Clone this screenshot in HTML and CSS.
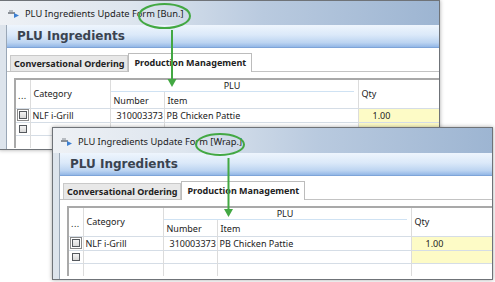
FILE: index.html
```html
<!DOCTYPE html>
<html lang="en">
<head>
    <meta charset="UTF-8">
    <title>PLU Ingredients Update Form</title>
    <link rel="stylesheet" href="styles.css">
</head>
<body>
    <div class="desk">

        <!-- back window: Bun. -->
        <div class="window win-bun">
            <div class="titlebar">
                <svg class="app-icon" width="11" height="8" viewBox="0 0 11 8">
                    <rect x="0" y="2" width="7" height="2" fill="#8a8f96"/>
                    <rect x="1" y="0" width="4" height="2" fill="#b7bcc2"/>
                    <path d="M6 3 L11 5.5 L6 8 Z" fill="#3d7fd1"/>
                </svg>
                <span class="title">PLU Ingredients Update Form [Bun.]</span>
            </div>
            <div class="client">
                <div class="banner">PLU Ingredients</div>
                <div class="tabstrip">
                    <div class="tab">Conversational Ordering</div>
                    <div class="tab active">Production Management</div>
                </div>
                <div class="panel">
                    <table class="grid">
                        <colgroup>
                            <col class="c-sel"><col class="c-cat"><col class="c-num"><col class="c-item"><col class="c-qty">
                        </colgroup>
                        <thead>
                            <tr class="h1">
                                <th rowspan="2" class="dots">...</th>
                                <th rowspan="2">Category</th>
                                <th colspan="2" class="plu"><span>PLU</span></th>
                                <th rowspan="2" class="qty-h">Qty</th>
                            </tr>
                            <tr class="h2">
                                <th>Number</th>
                                <th>Item</th>
                            </tr>
                        </thead>
                        <tbody>
                            <tr>
                                <td class="sel"><span class="focus"><span class="box"></span></span></td>
                                <td>NLF i-Grill</td>
                                <td class="num">310003373</td>
                                <td>PB Chicken Pattie</td>
                                <td class="qty">1.00</td>
                            </tr>
                            <tr>
                                <td class="sel"><span class="box"></span></td>
                                <td></td><td></td><td></td>
                                <td class="qty"></td>
                            </tr>
                            <tr>
                                <td></td><td></td><td></td><td></td><td></td>
                            </tr>
                        </tbody>
                    </table>
                </div>
            </div>
        </div>

        <!-- front window: Wrap. -->
        <div class="window win-wrap">
            <div class="titlebar">
                <svg class="app-icon" width="11" height="8" viewBox="0 0 11 8">
                    <rect x="0" y="2" width="7" height="2" fill="#8a8f96"/>
                    <rect x="1" y="0" width="4" height="2" fill="#b7bcc2"/>
                    <path d="M6 3 L11 5.5 L6 8 Z" fill="#3d7fd1"/>
                </svg>
                <span class="title">PLU Ingredients Update Form [Wrap.]</span>
            </div>
            <div class="client">
                <div class="banner">PLU Ingredients</div>
                <div class="tabstrip">
                    <div class="tab">Conversational Ordering</div>
                    <div class="tab active">Production Management</div>
                </div>
                <div class="panel">
                    <table class="grid">
                        <colgroup>
                            <col class="c-sel"><col class="c-cat"><col class="c-num"><col class="c-item"><col class="c-qty">
                        </colgroup>
                        <thead>
                            <tr class="h1">
                                <th rowspan="2" class="dots">...</th>
                                <th rowspan="2">Category</th>
                                <th colspan="2" class="plu"><span>PLU</span></th>
                                <th rowspan="2" class="qty-h">Qty</th>
                            </tr>
                            <tr class="h2">
                                <th>Number</th>
                                <th>Item</th>
                            </tr>
                        </thead>
                        <tbody>
                            <tr>
                                <td class="sel"><span class="focus"><span class="box"></span></span></td>
                                <td>NLF i-Grill</td>
                                <td class="num">310003373</td>
                                <td>PB Chicken Pattie</td>
                                <td class="qty">1.00</td>
                            </tr>
                            <tr>
                                <td class="sel"><span class="box"></span></td>
                                <td></td><td></td><td></td>
                                <td class="qty"></td>
                            </tr>
                            <tr>
                                <td></td><td></td><td></td><td></td><td></td>
                            </tr>
                        </tbody>
                    </table>
                </div>
            </div>
        </div>

        <!-- green call-outs -->
        <svg class="callouts" width="495" height="282" viewBox="0 0 495 282">
            <g fill="none" stroke="#43a843" stroke-width="2">
                <ellipse cx="164.5" cy="16" rx="25.5" ry="12"/>
                <line x1="172" y1="30" x2="172" y2="81"/>
                <ellipse cx="220" cy="144.5" rx="24" ry="10.5"/>
                <line x1="228.5" y1="158" x2="228.5" y2="211"/>
            </g>
            <g fill="#43a843">
                <path d="M167.5 79 L176.5 79 L172 87 Z"/>
                <path d="M224 209 L233 209 L228.5 217 Z"/>
            </g>
        </svg>
    </div>
</body>
</html>
```

FILE: styles.css
```css
* {
    margin: 0;
    padding: 0;
    box-sizing: border-box;
}

body {
    background: #fff;
    font-family: 'Noto Sans', 'Liberation Sans', sans-serif;
    color: #1e1e1e;
}

.desk {
    position: relative;
    width: 495px;
    height: 282px;
    overflow: hidden;
}

/* windows sit on a free canvas */
.window {
    position: absolute;
    background: #dde4ec;
    border: 1px solid #6f7378;
    box-shadow: 0 0 4px rgba(0, 0, 0, 0.35);
    overflow: hidden;
    display: flex;
    flex-direction: column;
}

.win-bun {
    left: -1px;
    top: 0;
    width: 441px;
    height: 150px;
}

.win-wrap {
    left: 52px;
    top: 127px;
    width: 441px;
    height: 153px;
}

.titlebar {
    height: 24px;
    flex: none;
    display: flex;
    align-items: center;
    gap: 6px;
    padding-left: 8px;
    background: linear-gradient(to right, #eef1f5 0%, #dde5ee 30%, #b9cadf 60%, #9db5d2 100%);
}

.win-wrap .titlebar {
    height: 25px;
    padding-top: 1px;
}

.app-icon {
    margin-top: 2px;
}

.title {
    font-size: 9.3px;
    color: #1b1b1b;
    white-space: nowrap;
}

.client {
    flex: 1;
    margin-left: 6px;
    border-left: 1px solid #9aa7b6;
    background: #fff;
    display: flex;
    flex-direction: column;
}

.banner {
    height: 23px;
    flex: none;
    padding-left: 10px;
    display: flex;
    align-items: center;
    font-family: 'DejaVu Sans', sans-serif;
    font-weight: bold;
    font-size: 12px;
    color: #3a4350;
    background: linear-gradient(to bottom, #eef5fd 0%, #dbe9f9 45%, #bcd4f1 80%, #93b7e6 100%);
    border-bottom: 1px solid #7ea4d8;
}

.tabstrip {
    flex: none;
    display: flex;
    align-items: flex-end;
    margin-top: 5px;
    padding-left: 3px;
    border-bottom: 1px solid #c3c3c3;
}

.tab {
    height: 16px;
    padding: 0 3px;
    display: flex;
    align-items: center;
    font-size: 9px;
    font-weight: bold;
    color: #222;
    white-space: nowrap;
    background: #e8e8e8;
    border: 1px solid #c9c9c9;
    border-bottom: none;
}

.tab.active {
    height: 19px;
    padding: 0 5px 1px;
    background: #fff;
    border-color: #bcbcbc;
    margin-bottom: -1px;
}

.panel {
    flex: 1;
    padding: 6px 0 0 7px;
}

.grid {
    border-collapse: collapse;
    table-layout: fixed;
    width: 500px;
    font-size: 9px;
    color: #222;
    border-top: 2px solid #a9a9a9;
    border-left: 2px solid #a9a9a9;
}

.c-sel { width: 15px; }
.c-cat { width: 80px; }
.c-num { width: 54px; }
.c-item { width: 194px; }
.c-qty { width: 157px; }

.grid th {
    font-weight: normal;
    text-align: left;
    padding: 0 3px;
    border-right: 1px solid #dcdcdc;
    white-space: nowrap;
}

.grid .h1 { height: 12px; }
.grid .h2 { height: 16px; }

.grid .h1 th { vertical-align: middle; }
.grid .dots { padding: 4px 0 0 2px; letter-spacing: 0.5px; }

.grid .plu {
    text-align: center;
    vertical-align: bottom;
    padding: 0 4px 0 0;
}

.grid .plu span {
    display: block;
    border-bottom: 1px solid #cfe2f3;
    line-height: 11px;
}

.grid .h2 th {
    vertical-align: bottom;
    padding-bottom: 1px;
}

.grid td {
    height: 13px;
    padding: 0 2px;
    border-right: 1px solid #dcdcdc;
    border-top: 1px solid #d5dde6;
    white-space: nowrap;
}

.grid .num { padding-left: 6px; }

.grid .qty {
    background: #fdfbc6;
    padding-left: 14px;
}

.grid .sel {
    padding: 0 1px;
    text-align: center;
    line-height: 0;
}

.box {
    display: inline-block;
    width: 8px;
    height: 8px;
    border: 1px solid #55595e;
    background: linear-gradient(#f4f4f4, #d9d9d9);
}

.focus {
    display: inline-block;
    padding: 1px;
    border: 1px solid #8a8a8a;
}

.callouts {
    position: absolute;
    left: 0;
    top: 0;
    pointer-events: none;
}
```
